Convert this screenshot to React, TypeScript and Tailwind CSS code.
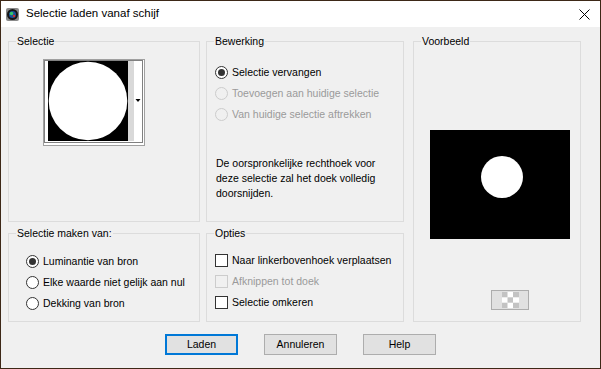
import React from 'react';

// Paint Shop Pro style "load selection from disk" dialog

function Radio({ checked = false, disabled = false, label }: { checked?: boolean; disabled?: boolean; label: string }) {
    return (
        <div className="flex items-center h-[21px]">
            <span
                className={
                    disabled
                        ? 'w-[13px] h-[13px] rounded-full border border-[#cccccc] bg-[#f0f0f0] flex items-center justify-center'
                        : 'w-[13px] h-[13px] rounded-full border border-[#333333] bg-white flex items-center justify-center'
                }
            >
                {checked && <span className="w-[7px] h-[7px] rounded-full bg-[#333333]" />}
            </span>
            <span className={disabled ? 'ml-[4px] text-[#9a9a9a]' : 'ml-[4px] text-black'}>{label}</span>
        </div>
    );
}

function Check({ disabled = false, label }: { disabled?: boolean; label: string }) {
    return (
        <div className="flex items-center h-[21px]">
            <span
                className={
                    disabled
                        ? 'w-[13px] h-[13px] border border-[#cccccc] bg-[#f0f0f0]'
                        : 'w-[13px] h-[13px] border border-[#333333] bg-white'
                }
            />
            <span className={disabled ? 'ml-[4px] text-[#9a9a9a]' : 'ml-[4px] text-black'}>{label}</span>
        </div>
    );
}

function Group({ title, className, children }: { title: string; className: string; children?: React.ReactNode }) {
    return (
        <div className={'relative border border-[#dcdcdc] ' + className}>
            <span className="absolute left-[7px] top-[-8px] px-[1px] leading-[14px] bg-[#f0f0f0]">{title}</span>
            {children}
        </div>
    );
}

function Button({ label, focused = false }: { label: string; focused?: boolean }) {
    return (
        <button
            className={
                focused
                    ? 'w-[73px] h-[21px] border-2 border-[#0078d7] bg-[#e1e1e1] flex items-center justify-center'
                    : 'w-[73px] h-[21px] border border-[#adadad] bg-[#e1e1e1] flex items-center justify-center'
            }
        >
            {label}
        </button>
    );
}

function App() {
    return (
        <div className="w-[601px] h-[369px] border border-[#3d2817] bg-[#f0f0f0] flex flex-col font-['Liberation_Sans',sans-serif] text-[10.5px] text-black overflow-hidden">
            {/* title bar */}
            <div className="h-[26px] bg-white flex items-center pl-[4px] pr-[10px] shrink-0">
                <svg width="15" height="15" viewBox="0 0 15 15">
                    <rect x="1" y="1" width="13" height="13" rx="2" fill="#8a8a8a" />
                    <circle cx="7.5" cy="7.5" r="5.5" fill="#151515" />
                    <circle cx="7.5" cy="7.5" r="3.5" fill="#1d4f9a" />
                    <circle cx="6.5" cy="6.5" r="1.8" fill="#36c46a" />
                    <circle cx="9" cy="9" r="1.2" fill="#d0342c" />
                </svg>
                <span className="ml-[6px] text-[11.5px]">Selectie laden vanaf schijf</span>
                <svg className="ml-auto" width="11" height="11" viewBox="0 0 11 11">
                    <path d="M0.5 0.5 L10.5 10.5 M10.5 0.5 L0.5 10.5" stroke="#000" strokeWidth="1" />
                </svg>
            </div>

            {/* body */}
            <div className="flex pt-[14px] pl-[7px]">
                <div className="flex flex-col gap-[11px] w-[192px]">
                    <Group title="Selectie" className="h-[181px]">
                        <div className="ml-[34px] mt-[17px] w-[102px] h-[87px] border border-[#a0a0a0] bg-white">
                            <svg width="100" height="85" viewBox="0 0 100 85">
                                <rect x="4" y="1" width="80" height="80" fill="#000" />
                                <circle cx="44" cy="41" r="39.3" fill="#fff" />
                                <rect x="84" y="1" width="6" height="80" fill="#d9d9d9" />
                                <path d="M91.5 39 L96.5 39 L94 42 Z" fill="#000" />
                                <rect x="0.5" y="0.5" width="98" height="82" fill="none" stroke="#000" strokeDasharray="1 1" />
                            </svg>
                        </div>
                    </Group>
                    <Group title="Selectie maken van:" className="h-[89px]">
                        <div className="flex flex-col ml-[17px] mt-[17px]">
                            <Radio checked label="Luminantie van bron" />
                            <Radio label="Elke waarde niet gelijk aan nul" />
                            <Radio label="Dekking van bron" />
                        </div>
                    </Group>
                </div>

                <div className="flex flex-col gap-[11px] w-[198px] ml-[6px]">
                    <Group title="Bewerking" className="h-[181px]">
                        <div className="flex flex-col ml-[8px] mt-[20px]">
                            <Radio checked label="Selectie vervangen" />
                            <Radio disabled label="Toevoegen aan huidige selectie" />
                            <Radio disabled label="Van huidige selectie aftrekken" />
                        </div>
                        <p className="ml-[9px] mt-[31px] leading-[15px]">
                            De oorspronkelijke rechthoek voor
                            <br />
                            deze selectie zal het doek volledig
                            <br />
                            doorsnijden.
                        </p>
                    </Group>
                    <Group title="Opties" className="h-[89px]">
                        <div className="flex flex-col ml-[8px] mt-[16px]">
                            <Check label="Naar linkerbovenhoek verplaatsen" />
                            <Check disabled label="Afknippen tot doek" />
                            <Check label="Selectie omkeren" />
                        </div>
                    </Group>
                </div>

                <Group title="Voorbeeld" className="w-[168px] h-[281px] ml-[9px]">
                    <div className="ml-[16px] mt-[88px] w-[140px] h-[109px] bg-black">
                        <svg width="140" height="109" viewBox="0 0 140 109">
                            <circle cx="72" cy="47" r="21" fill="#fff" />
                        </svg>
                    </div>
                    <div className="ml-[77px] mt-[51px] w-[38px] h-[20px] border border-[#adadad] bg-[#e1e1e1] flex items-center justify-center">
                        <svg width="17" height="16" viewBox="0 0 17 16">
                            <rect width="17" height="16" fill="#fff" />
                            <rect x="0" y="0" width="5.5" height="5.3" fill="#c3c3c3" />
                            <rect x="11" y="0" width="6" height="5.3" fill="#c3c3c3" />
                            <rect x="5.5" y="5.3" width="5.5" height="5.4" fill="#c3c3c3" />
                            <rect x="0" y="10.7" width="5.5" height="5.3" fill="#c3c3c3" />
                            <rect x="11" y="10.7" width="6" height="5.3" fill="#c3c3c3" />
                        </svg>
                    </div>
                </Group>
            </div>

            {/* buttons */}
            <div className="flex gap-[26px] ml-[164px] mt-[12px]">
                <Button focused label="Laden" />
                <Button label="Annuleren" />
                <Button label="Help" />
            </div>
        </div>
    );
}

export default App;
